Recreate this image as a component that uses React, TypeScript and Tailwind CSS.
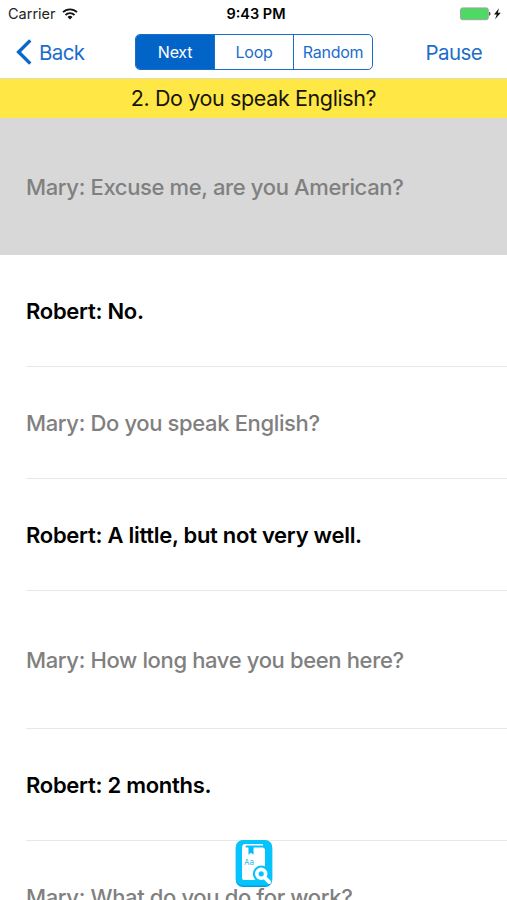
import clsx from "clsx";

const MODES = ["Next", "Loop", "Random"];

const LINES = [
  { speaker: "Mary", text: "Excuse me, are you American?", size: "h-[137px]" },
  { speaker: "Robert", text: "No.", size: "h-[112px]" },
  { speaker: "Mary", text: "Do you speak English?", size: "h-[112px]" },
  { speaker: "Robert", text: "A little, but not very well.", size: "h-[112px]" },
  { speaker: "Mary", text: "How long have you been here?", size: "h-[138px]" },
  { speaker: "Robert", text: "2 months.", size: "h-[112px]" },
  { speaker: "Mary", text: "What do you do for work?", size: "h-[112px]" },
];

function StatusBar() {
  return (
    <div className="grid h-[26px] grid-cols-3 items-center pt-[2px] text-[14.5px] text-[#222]">
      <div className="flex items-center gap-[6px] pl-[8px]">
        <span>Carrier</span>
        <svg width="16" height="12" viewBox="0 0 16 12" fill="none" stroke="#111" strokeWidth="1.8">
          <path d="M1 4.2a10 10 0 0 1 14 0M3.5 7a6.4 6.4 0 0 1 9 0" />
          <path d="M5.5 9a3.6 3.6 0 0 1 5 0L8 11.6z" fill="#111" stroke="none" />
        </svg>
      </div>
      <span className="pl-[5px] text-center font-semibold text-black">9:43 PM</span>
      <div className="flex items-center justify-end pr-[5px]">
        <svg width="42" height="14" viewBox="0 0 42 14">
          <rect x="0.5" y="0.9" width="27.8" height="11.8" rx="2" fill="#4cd964" stroke="#a3a3a3" />
          <path d="M29 4.8c2 .4 2 3.6 0 4z" fill="#555" />
          <path d="M39 1.2l-5 6.3h2.8l-1.8 4.7 5.8-6.5h-3z" fill="#111" />
        </svg>
      </div>
    </div>
  );
}

function NavBar() {
  return (
    <nav className="grid h-[53px] grid-cols-[135px_238px_1fr] items-center border-b border-[#e2dcae] text-[20.5px] text-[#1b6dcb]">
      <button className="flex items-center gap-[7px] pl-[16px]">
        <svg width="16" height="26" viewBox="0 0 16 26" fill="none" stroke="#0b67c8" strokeWidth="3.4">
          <path d="M14.3 1.4L2.6 13l11.7 11.6" />
        </svg>
        <span className="pt-[2px] tracking-[-0.6px]">Back</span>
      </button>
      <div className="flex h-[36px] overflow-hidden rounded-[5px] border border-[#1b6dcb] text-[16px] tracking-[-0.25px]">
        {MODES.map((mode, index) => (
          <button
            key={mode}
            className={clsx(
              "flex-1 basis-0",
              index === 0 ? "bg-[#0364c7] text-white" : "border-l border-[#1b6dcb]"
            )}
          >
            {mode}
          </button>
        ))}
      </div>
      <button className="pt-[2px] pr-[25px] text-right tracking-[-0.6px]">Pause</button>
    </nav>
  );
}

function DictionaryButton() {
  return (
    <button className="absolute top-[840px] left-[235px]" aria-label="Dictionary">
      <svg width="38" height="48" viewBox="0 0 38 48">
        <rect x="0.8" y="1" width="36.4" height="46" rx="7" fill="#079ce0" />
        <rect x="0.8" y="0" width="36.4" height="45.5" rx="7" fill="#05c3fd" />
        <path d="M7 8Q7 4 10 4H28V5.6H12Q9.5 6 11 7.5H28Q30 8 30 10V40H9Q7 40 7 38z" fill="#fff" />
        <path d="M13.5 6.7h5v8l-2.5-2-2.5 2z" fill="#05bafa" />
        <text x="9" y="25" fontSize="8" fill="#24bef1">Aa</text>
        <circle cx="26.2" cy="33.8" r="8.3" fill="#05c3fd" />
        <path d="M30 38l5.3 4.7" stroke="#05c3fd" strokeWidth="6" />
        <circle cx="26.2" cy="33.8" r="4.4" fill="none" stroke="#fff" strokeWidth="3.6" />
        <path d="M29.6 37.4l4.7 4.7" stroke="#fff" strokeWidth="3.8" strokeLinecap="round" />
      </svg>
    </button>
  );
}

export default function App() {
  return (
    <div className="relative h-[900px] w-[507px] overflow-hidden bg-white font-[Inter,sans-serif]">
      <StatusBar />
      <NavBar />

      <h1 className="flex h-[39px] items-center justify-center bg-[#ffe845] text-[21.5px] tracking-[-0.38px] text-[#17150b]">
        2. Do you speak English?
      </h1>

      {/* Conversation */}
      <ul className="text-[22px]">
        {LINES.map((line, index) => (
          <li
            key={line.text}
            className={clsx(
              "pl-[26px]",
              index === 0 && "bg-[#d8d8d8]",
              line.speaker === "Mary"
                ? "font-medium tracking-[-0.36px] text-[#808080]"
                : "font-semibold tracking-[-0.28px] text-black"
            )}
          >
            <div
              className={clsx(
                "flex items-center pt-[1px] whitespace-nowrap",
                line.size,
                index > 0 && "border-b border-[#e7e7e7]"
              )}
            >
              {line.speaker}: {line.text}
            </div>
          </li>
        ))}
      </ul>

      <DictionaryButton />
    </div>
  );
}
